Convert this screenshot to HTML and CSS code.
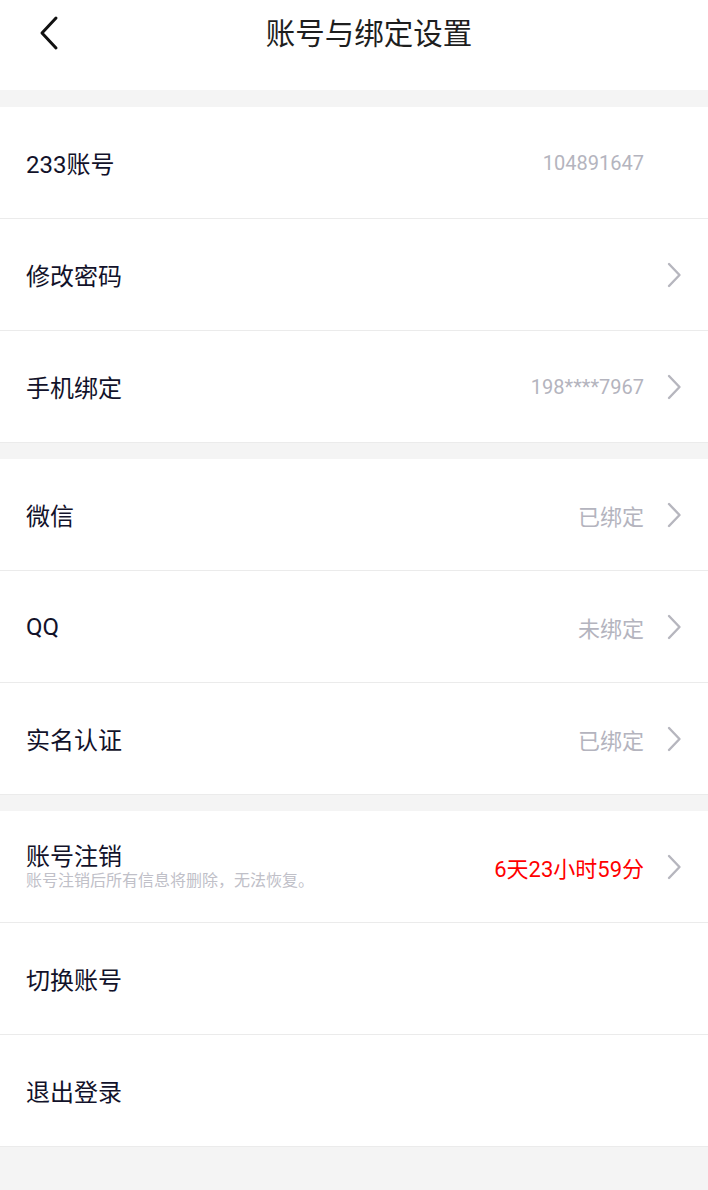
FILE: index.html
```html
<!DOCTYPE html>
<html>
<head>
    <meta charset="utf-8">
    <title>账号与绑定设置</title>
    <link rel="stylesheet" href="styles.css">
</head>
<body>

<div class="topbar">
    <a class="back" href="#">
        <svg width="22" height="36" viewBox="0 0 22 36"><path d="M18 3 L4 18 L18 33" fill="none" stroke="#111" stroke-width="3" stroke-linecap="round" stroke-linejoin="round"/></svg>
    </a>
    <h1>账号与绑定设置</h1>
</div>

<div class="group first">
    <div class="row no-arrow">
        <span class="label">233账号</span>
        <span class="value num">104891647</span>
    </div>
    <div class="row">
        <span class="label">修改密码</span>
        <span class="arrow"></span>
    </div>
    <div class="row">
        <span class="label">手机绑定</span>
        <span class="value num">198****7967</span>
        <span class="arrow"></span>
    </div>
</div>

<div class="group">
    <div class="row">
        <span class="label">微信</span>
        <span class="value">已绑定</span>
        <span class="arrow"></span>
    </div>
    <div class="row">
        <span class="label">QQ</span>
        <span class="value">未绑定</span>
        <span class="arrow"></span>
    </div>
    <div class="row">
        <span class="label">实名认证</span>
        <span class="value">已绑定</span>
        <span class="arrow"></span>
    </div>
</div>

<div class="group">
    <div class="row">
        <div class="label-stack">
            <span class="label">账号注销</span>
            <span class="hint">账号注销后所有信息将删除，无法恢复。</span>
        </div>
        <span class="value countdown">6天23小时59分</span>
        <span class="arrow"></span>
    </div>
    <div class="row">
        <span class="label">切换账号</span>
    </div>
    <div class="row">
        <span class="label">退出登录</span>
    </div>
</div>

</body>
</html>
```

FILE: styles.css
```css
body {
    font-family: 'Roboto', 'Noto Sans CJK SC', sans-serif;
    margin: 0;
    padding: 0;
    background: #f4f4f4;
    color: #12122a;
}

.topbar {
    height: 90px;
    box-sizing: border-box;
    padding-bottom: 22px; /* white strip under the bar */
    background: #fff;
    display: flex;
    align-items: center;
}
.back {
    display: flex;
    margin-left: 38px;
    margin-top: -2px;
}
.topbar h1 {
    flex: 1;
    margin: 0;
    padding-right: 30px;
    text-align: center;
    font-size: 29.5px;
    line-height: 40px;
    font-weight: 400;
    color: #1e1e1e;
}

.group {
    background: #fff;
    margin-top: 16px;
}
.group.first {
    margin-top: 17px;
}

.row {
    height: 112px;
    box-sizing: border-box;
    border-bottom: 1px solid #ebebeb;
    padding: 0 26px;
    display: flex;
    align-items: center;
}
.row.no-arrow {
    padding-right: 64px;
}

.label {
    font-size: 24px;
    color: #12122a;
    flex: 1;
}
.label-stack {
    flex: 1;
    display: flex;
    flex-direction: column;
}
.label-stack .label {
    line-height: 28px;
}
.hint {
    font-size: 16px;
    line-height: 20px;
    color: #c0c0c8;
}

.value {
    font-size: 22px;
    color: #b4b4be;
}
.value.num {
    font-size: 20px;
}
.value.countdown {
    color: #ff0000;
    font-size: 22px;
}

.arrow {
    width: 16px;
    height: 26px;
    margin-left: 22px;
    background: url("data:image/svg+xml,%3Csvg xmlns='http://www.w3.org/2000/svg' width='16' height='26' viewBox='0 0 16 26'%3E%3Cpath d='M3 2 L13.5 13 L3 24' fill='none' stroke='%23b6b6be' stroke-width='2.4' stroke-linecap='round' stroke-linejoin='round'/%3E%3C/svg%3E") no-repeat center;
}
```
